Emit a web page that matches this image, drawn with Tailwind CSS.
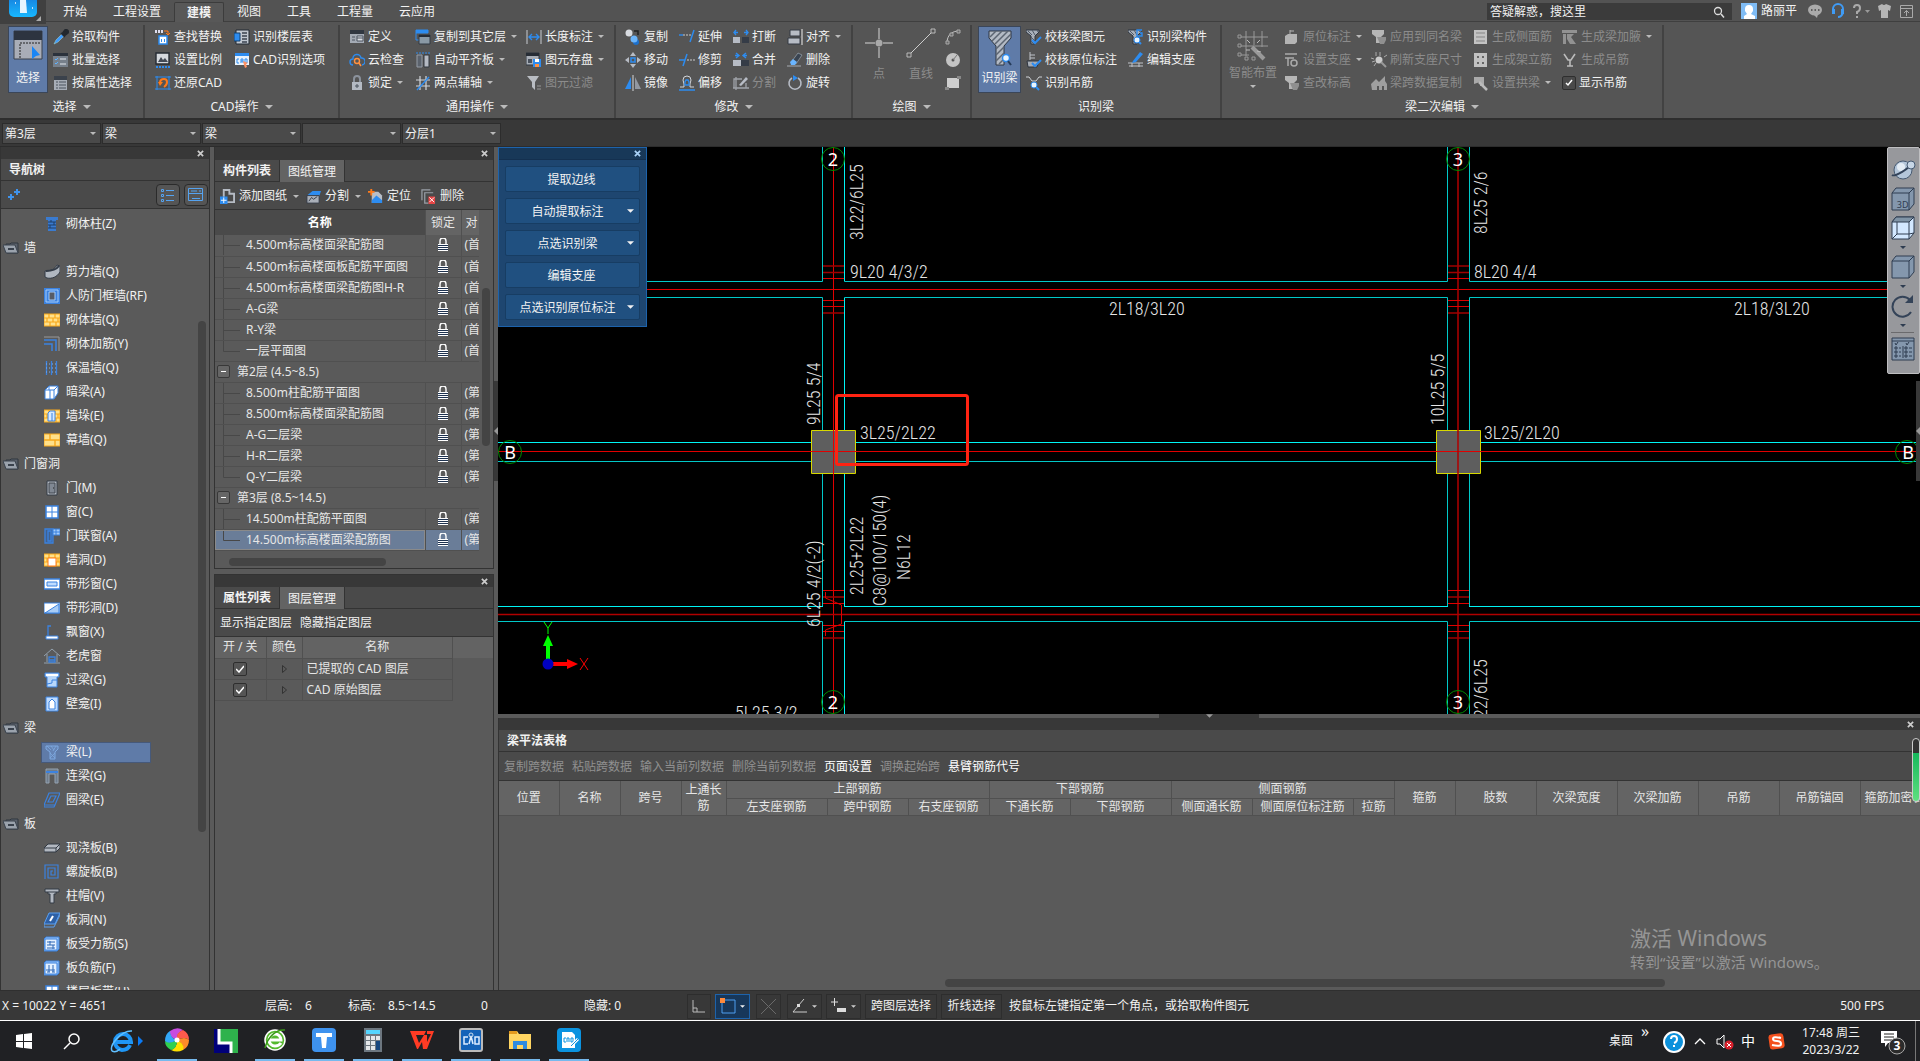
<!DOCTYPE html>
<html lang="zh-CN">
<head>
    <meta charset="UTF-8">
    <meta name="viewport" content="width=device-width, initial-scale=1.0">
    <title>梁平法表格 - 建模</title>
    <script src="https://cdn.jsdelivr.net/npm/@tailwindcss/browser@4"></script>
</head>
<body class="flex h-screen flex-col overflow-hidden bg-[#383838] font-['Noto_Sans','Noto_Sans_CJK_SC',sans-serif] text-xs text-[#f2f2f2]">

    <!-- Icon sprite -->
    <svg class="hidden">
        <defs>
            <symbol id="arrow" viewBox="0 0 8 4"><path d="M0 0h8L4 4z" fill="currentColor"/></symbol>
            <symbol id="close" viewBox="0 0 8 8"><path d="M1 1l6 6M7 1L1 7" stroke="currentColor" stroke-width="2"/></symbol>
            <symbol id="pick" viewBox="0 0 16 16"><path d="M1 15l2-4 6-6 2 2-6 6z" fill="#3d9bff" stroke="#9cc" stroke-width=".6"/><path d="M8 4l4 4M9 5l3-4c2-1 4 1 3 3l-4 3z" fill="#23282e" stroke="#23282e" stroke-width="1.6"/></symbol>
            <symbol id="batch" viewBox="0 0 16 16"><path d="M0 1h15v3H0z" fill="#2b323c"/><path d="M0 4h15v11H0z" fill="#77808b"/><path d="M2 7l1 1 2-2M2 11l1 1 2-2" fill="none" stroke="#5cb2ff"/><path d="M7 7h6M7 12h6" stroke="#e4e8ee"/></symbol>
            <symbol id="attr" viewBox="0 0 16 16"><path d="M1 1h13v14H1z" fill="#a7adb6"/><path d="M1 1h13v4H1z" fill="#3b424c"/><path d="M3 7h2M3 10h2M3 13h2M6 7h7M6 10h7M6 13h7" stroke="#4b525c"/></symbol>
            <symbol id="find" viewBox="0 0 16 16"><path d="M0 1h2v3H0zM3 1h2v3H3zM6 1h2v3H6z" fill="#dde"/><path d="M9 2h4v4m-2-2l2 2 2-2" fill="none" stroke="#ff7a1a"/><path d="M4 7h8v8H4z" fill="#fff" stroke="#2d8cf0" stroke-width="1.5"/><path d="M6 10h1v3H6zM9 10h1v3H9z" fill="#2d8cf0"/></symbol>
            <symbol id="scale" viewBox="0 0 16 16"><path d="M1 1h13v11H1z" fill="#d4d8dd" stroke="#252b33" stroke-width="1.4"/><path d="M3 10l3-5 2 3 2-2 3 4z" fill="#434a55"/><path d="M1 15h14" stroke="#2d8cf0" stroke-width="2" stroke-dasharray="2 1"/></symbol>
            <symbol id="restore" viewBox="0 0 16 16"><path d="M2 1v14M14 1v14M0 14h16M0 2h16" stroke="#2d8cf0"/><path d="M5 8q0-4 4-4 3 0 3 3t-3 5" fill="none" stroke="#ff7a1a" stroke-width="2"/><path d="M3 7h5l-3 4z" fill="#ff7a1a"/></symbol>
            <symbol id="floors" viewBox="0 0 16 16"><path d="M2 1h13v14H2z" fill="#c0c7d0" stroke="#232b35"/><path d="M0 4h6v8H0z" fill="#2d8cf0" stroke="#14406c"/><path d="M8 4h5M8 7h5M8 10h5M8 13h5" stroke="#39424e" stroke-width="1.4"/></symbol>
            <symbol id="cadopt" viewBox="0 0 16 16"><path d="M1 1h14v12H1z" fill="#e8f2fd"/><path d="M1 1h14v3H1z" fill="#2d8cf0"/><path d="M5 7H3v4h2M7 11V7h2v4M7 9h2M11 7v4h2V7z" fill="none" stroke="#2d8cf0"/><path d="M9 9l5 2-2 1 1 3-2 1-1-3z" fill="#ff9060"/></symbol>
            <symbol id="define" viewBox="0 0 16 16"><path d="M1 1h14v13H1z" fill="#a4abb5"/><path d="M1 1h14v4H1z" fill="#303741"/><path d="M3 8h3M3 11h3M8 7h6v5H8zM8 9h6" stroke="#4c5460" fill="#d8dce2"/></symbol>
            <symbol id="cloud" viewBox="0 0 16 16"><path d="M4 13a3 3 0 0 1 0-6 4 4 0 0 1 8-1 3 3 0 0 1 1 7" fill="none" stroke="#2d8cf0" stroke-width="1.4"/><circle cx="8" cy="9" r="2.5" fill="none" stroke="#ff9040" stroke-width="1.4"/><path d="M10 11l2 3" stroke="#ff9040" stroke-width="1.5"/></symbol>
            <symbol id="lock" viewBox="0 0 16 16"><path d="M5 7V4a3 3 0 0 1 6 0v3" fill="none" stroke="#8b929c" stroke-width="2"/><path d="M3 7h10v8H3z" fill="#b4bac3"/><path d="M8 9v4M6 11h4" stroke="#4b525c"/></symbol>
            <symbol id="copyto" viewBox="0 0 16 16"><path d="M1 1h12v3H1z" fill="#2d8cf0" stroke="#2d8cf0"/><path d="M1 4v7h3" fill="none" stroke="#2d8cf0"/><path d="M4 6h11v9H4z" fill="#8a99a5" stroke="#323a44"/><path d="M4 6h11v2H4z" fill="#252c36"/></symbol>
            <symbol id="align2" viewBox="0 0 16 16"><path d="M1 1h14" stroke="#2d8cf0" stroke-dasharray="2 1"/><path d="M2 3h5v12H2z" fill="#5b626c" stroke="#959ca6"/><path d="M9 3h5v12H9z" fill="#b4b9c2" stroke="#30363f"/></symbol>
            <symbol id="axis" viewBox="0 0 16 16"><path d="M5 1v14M11 1v14M1 5h14M1 11h14" stroke="#d2d6db" stroke-width="1.2"/><path d="M2 15L14 2" stroke="#2d8cf0" stroke-width="1.4"/></symbol>
            <symbol id="length" viewBox="0 0 16 16"><path d="M1 1v14M15 1v14" stroke="#c8ccd2"/><path d="M3 8h10M6 5L3 8l3 3M10 5l3 3-3 3" fill="none" stroke="#2d8cf0" stroke-width="1.4"/></symbol>
            <symbol id="save" viewBox="0 0 16 16"><path d="M0 1h13v12H0z" fill="#a8aeb7" stroke="#2f3640"/><path d="M0 1h13v3H0z" fill="#262c35"/><path d="M2 7h4v4H2z" fill="#49515d"/><path d="M7 7h8v8H7z" fill="#2d8cf0"/><path d="M9 7h4v3H9z" fill="#fff"/><path d="M9 12h4v3H9z" fill="#ff9040"/></symbol>
            <symbol id="filter" viewBox="0 0 16 16"><path d="M1 1h12L9 7v8l-3-3V7z" fill="#b9bdc3"/><path d="M11 11h4M11 14h4" stroke="#999"/></symbol>
            <symbol id="copy" viewBox="0 0 16 16"><circle cx="4" cy="4" r="3.5" fill="#d8dbe0"/><circle cx="11" cy="13" r="3" fill="#1c70cc"/><circle cx="9" cy="10" r="3.5" fill="#6bb4fa"/><path d="M9 2h4v4" fill="none" stroke="#222" stroke-width="1.5"/></symbol>
            <symbol id="move" viewBox="0 0 16 16"><path d="M8 0l3 4H5zM8 16l3-4H5zM0 8l4-3v6zM16 8l-4-3v6z" fill="#b7bcc5"/><path d="M6 6h4v4H6z" fill="none" stroke="#2d8cf0" stroke-width="1.5"/></symbol>
            <symbol id="mirror" viewBox="0 0 16 16"><path d="M6 2v12H0z" fill="#2d8cf0"/><path d="M10 2v12h6z" fill="#9298a1"/><path d="M8 0v16" stroke="#d5d8dc"/></symbol>
            <symbol id="extend" viewBox="0 0 16 16"><path d="M0 6h4" stroke="#2d8cf0" stroke-width="1.4"/><path d="M4 6h8" stroke="#ccc" stroke-dasharray="2 1"/><path d="M15 1l-4 12" stroke="#2d8cf0" stroke-width="1.5"/></symbol>
            <symbol id="trim" viewBox="0 0 16 16"><path d="M0 8h6M8 2L4 14" stroke="#2d8cf0" stroke-width="1.5"/><path d="M8 8h8" stroke="#ccc" stroke-dasharray="2 1"/></symbol>
            <symbol id="offset" viewBox="0 0 16 16"><path d="M1 12h4V9L4 5a4 4 0 0 1 8 0l-1 4v3h4" fill="none" stroke="#d0d4da"/><path d="M0 15h16M6 10h4V7l-1-2H7L6 7z" fill="none" stroke="#2d8cf0" stroke-width="1.3"/></symbol>
            <symbol id="break" viewBox="0 0 16 16"><path d="M3 1L1 3.500l2 2.500M13 1l2 2.500L13 6M1 3.500h4M15 3.500h-4" fill="none" stroke="#2d8cf0" stroke-width="1.4"/><path d="M0 8h7v6H0z" fill="#b7bcc5"/><path d="M9 8h7v6H9z" fill="#353c47"/></symbol>
            <symbol id="merge" viewBox="0 0 16 16"><path d="M3 1l3 2.500L3 6M13 1l-3 2.500L13 6M2 3.500h4M14 3.500h-4" fill="none" stroke="#2d8cf0" stroke-width="1.4"/><path d="M0 8h8v6H0z" fill="#b7bcc5"/><path d="M8 8h8v6H8z" fill="#353c47"/></symbol>
            <symbol id="split" viewBox="0 0 16 16"><path d="M9 4H1v9h12V8M0 13h16M3 2v13" fill="none" stroke="#a0a4aa" stroke-width="1.3"/><path d="M6 10l7-8 2 2-7 7z" fill="#b7bcc5"/></symbol>
            <symbol id="align" viewBox="0 0 16 16"><path d="M3 1h10v6H3zM1 9h12v6H1z" fill="#b7bcc5" stroke="#343b45"/><path d="M15 0v16" stroke="#eee"/></symbol>
            <symbol id="erase" viewBox="0 0 16 16"><path d="M0 14h14" stroke="#a7abb1"/><path d="M5 9l6-8 4 2-6 9z" fill="#3a4451" stroke="#99a3ad" stroke-width=".7"/><path d="M3 10l3-3 4 3-2 3H4z" fill="#6ab5ff"/></symbol>
            <symbol id="rotate" viewBox="0 0 16 16"><path d="M5 3a6 6 0 1 0 6 0" fill="none" stroke="#b7bcc5" stroke-width="1.6"/><path d="M6 0l5 3-5 3z" fill="#2d8cf0"/></symbol>
            <symbol id="point" viewBox="0 0 28 30"><path d="M14 0v11M14 19v11M0 15h10M18 15h10" stroke="#d6d6d6"/><circle cx="14" cy="15" r="3.500" fill="#a9a9a9"/></symbol>
            <symbol id="line" viewBox="0 0 30 30"><path d="M3 27L27 3" stroke="#ccc"/><path d="M1 25h4v4H1zM25 1h4v4h-4z" fill="#555" stroke="#bbb"/></symbol>
            <symbol id="arc" viewBox="0 0 16 16"><path d="M2 14C2 6 7 2 14 2" fill="none" stroke="#c4c4c4"/><path d="M1 12h3v3H1zM5 4h3v3H5zM12 1h3v3h-3z" fill="#666" stroke="#aaa"/></symbol>
            <symbol id="circ" viewBox="0 0 16 16"><circle cx="8" cy="8" r="7" fill="#c4c4c4"/><circle cx="8" cy="8" r="1.500" fill="#555"/><path d="M8 8l4-5" stroke="#777"/></symbol>
            <symbol id="rect" viewBox="0 0 16 16"><path d="M2 3h12v10H2z" fill="#cfcfcf"/><path d="M0 12h4v3H0zM12 1h4v3h-4z" fill="#888"/></symbol>
            <symbol id="beam" viewBox="0 0 16 16"><path d="M0 1h13v2L9 7v8H5V7L0 3z" fill="#a8b0ba" stroke="#2f3742"/><path d="M2 2l4 4M6 1l3 5M5 8l4 4M5 12l3 3M11 1l1 2" stroke="#515a66"/></symbol>
            <symbol id="bigbeam" viewBox="0 0 32 36"><path d="M5 1h22v7l-7 8v19h-8V16L5 8z" fill="#b3bac4" stroke="#2f3742"/><path d="M6 7l6-6M8 11L18 1M11 14L24 1M12 19L27 4M12 25l8-8M12 31l8-8M15 34l5-5" stroke="#5c6572" stroke-width="1.500"/><circle cx="22" cy="28" r="3.500" fill="#e7f4ff" stroke="#2d8cf0" stroke-width="1.500"/><path d="M24 31l3 4" stroke="#263c5a" stroke-width="2"/></symbol>
            <symbol id="beamcheck" viewBox="0 0 16 16"><use href="#beam"/><path d="M6 11l3 3 6-6" fill="none" stroke="#2d8cf0" stroke-width="2"/></symbol>
            <symbol id="notecheck" viewBox="0 0 16 16"><path d="M4 0v8M4 3h5M4 6h5" stroke="#c0c4ca"/><path d="M1 9h12l-2 6H2z" fill="#a6acb5" stroke="#2d343e"/><path d="M6 11l3 3 6-6" fill="none" stroke="#2d8cf0" stroke-width="2"/></symbol>
            <symbol id="hang" viewBox="0 0 16 16"><path d="M0 2h3l3 4h4l3-4h3" fill="none" stroke="#cfd2d6"/><circle cx="8" cy="10" r="3" fill="#e7f4ff" stroke="#2d8cf0"/><path d="M10 12l3 3" stroke="#2d8cf0" stroke-width="2"/></symbol>
            <symbol id="beamg" viewBox="0 0 16 16"><use href="#beam"/><path d="M14 1H9v6h5V4h-2" fill="none" stroke="#2d8cf0" stroke-width="1.400"/><circle cx="9" cy="11" r="3" fill="#e7f4ff" stroke="#2d8cf0"/><path d="M11 13l2 2" stroke="#2d8cf0" stroke-width="2"/></symbol>
            <symbol id="editbeam" viewBox="0 0 16 16"><path d="M0 11h15M1 14h14M4 11v4M11 11v4" stroke="#c0c4ca"/><path d="M5 9l7-9 3 2-7 8-4 1z" fill="#2d8cf0"/></symbol>
            <symbol id="smart" viewBox="0 0 32 32"><path d="M9 2v25M17 2v14M25 2v16M4 8h27M4 17h27M4 26h8" stroke="#999"/><path d="M1 6h3v3H1zM1 15h3v3H1zM1 24h3v3H1zM8 28h3v3H8zM15 28h3v3h-3z" fill="#555" stroke="#999"/><path d="M15 18l12 12" stroke="#999" stroke-width="4"/><path d="M9 21h4M20 14l3-3M13 14l-3-3M20 22l4 1" stroke="#bbb"/></symbol>
            <symbol id="g-note" viewBox="0 0 16 16"><path d="M1 7l3-2h9v8l-2 2H1z" fill="#b4b4b4"/><path d="M6 6V1M6 2h4" stroke="#b4b4b4"/></symbol>
            <symbol id="g-seat" viewBox="0 0 16 16"><path d="M1 2h12M1 6h9M4 6v8" stroke="#aaa" stroke-width="1.500"/><circle cx="10" cy="11" r="3" fill="none" stroke="#aaa" stroke-width="1.500"/></symbol>
            <symbol id="g-beam" viewBox="0 0 16 16"><path d="M1 1h12v4l-3 3v6H5V8L1 5z" fill="#b6b6b6"/><path d="M6 8h9v3l-2 4H9z" fill="#8f8f8f"/></symbol>
            <symbol id="g-ref" viewBox="0 0 16 16"><path d="M5 0v4M9 0v4M0 6l3 1M1 10l3-1M13 5l3-2M3 14l2-3" stroke="#ababab"/><circle cx="8" cy="8" r="3.500" fill="#ccc"/><path d="M10 10l5 5" stroke="#999" stroke-width="2"/></symbol>
            <symbol id="g-span" viewBox="0 0 16 16"><path d="M0 9l5-5 3 3 6-6v5l2 3v6h-3v-4h-2v4H8v-4H6v4H1z" fill="#9f9f9f"/></symbol>
            <symbol id="g-list" viewBox="0 0 16 16"><path d="M1 1h13v14H1z" fill="#c2c2c2"/><path d="M3 4h9M3 8h9M3 12h9" stroke="#858585"/></symbol>
            <symbol id="g-dots" viewBox="0 0 16 16"><path d="M1 1h13v14H1z" fill="#c2c2c2"/><path d="M4 4h2v2H4zM9 4h2v2H9zM4 10h2v2H4zM9 10h2v2H9z" fill="#666"/></symbol>
            <symbol id="g-arch" viewBox="0 0 16 16"><path d="M1 2h10v9H7V7L1 9z" fill="#aaa"/><path d="M6 7l8 8" stroke="#bbb" stroke-width="2.500"/></symbol>
            <symbol id="g-hau" viewBox="0 0 16 16"><path d="M0 1h15v3H0zM1 5h3v10H1zM5 5h7l-3 3 5 7H8L5 10z" fill="#929292"/></symbol>
            <symbol id="g-hook" viewBox="0 0 16 16"><path d="M2 2l4 6h3l4-6M8 8v6M5 14h6" fill="none" stroke="#bbb" stroke-width="1.600"/></symbol>
            <symbol id="padlock" viewBox="0 0 12 14"><path d="M3 6V3a3 3 0 0 1 6 0v3" fill="none" stroke="#fff" stroke-width="1.400"/><path d="M1 6h10v7H1z" fill="#1f3350"/><path d="M1 6.500h10M1 8.500h10M1 10.500h10M1 12.500h10" stroke="#fff"/></symbol>
            <symbol id="folder" viewBox="0 0 16 12"><path d="M3 2h4l1-1h7v10H4z" fill="#5a616b" stroke="#2f363f"/><path d="M0 3h12l3 8H3z" fill="#9aa2ac" stroke="#3a424d"/><path d="M5 7h6" stroke="#39414c" stroke-width="2"/></symbol>
            <symbol id="t-col" viewBox="0 0 16 16"><path d="M2 1h12v3h-2v11H4V4H2z" fill="#3a7bd0"/><path d="M4 6h8M4 9h8M4 12h8M7 4v2M10 6v3M6 9v3" stroke="#1f3e68"/></symbol>
            <symbol id="t-wall" viewBox="0 0 16 16"><path d="M1 7c6 0 10-2 12-6l3 1v6c-3 5-8 7-13 6l-2-1z" fill="#b0b7c0" stroke="#333b46"/><path d="M2 7c6 0 10-1 13-5" fill="none" stroke="#333b46" stroke-width="2"/></symbol>
            <symbol id="t-rf" viewBox="0 0 16 16"><path d="M0 0h16v16H0z" fill="#3b82e0"/><path d="M2 2h12v12H2z" fill="none" stroke="#a5ccfa"/><path d="M5 4h6v8H5z" fill="#565c66" stroke="#a5ccfa"/></symbol>
            <symbol id="t-brick" viewBox="0 0 16 16"><path d="M0 2h16v12H0z" fill="#ffe08a" stroke="#f8a81b"/><path d="M0 6h16M0 10h16M5 2v4M11 2v4M3 6v4M9 6v4M14 6v4M6 10v4M12 10v4" stroke="#f8a81b" stroke-width="1.200"/></symbol>
            <symbol id="t-bricks" viewBox="0 0 16 16"><path d="M0 2h16v12H0z" fill="#ffe08a" stroke="#f8a81b"/><path d="M0 8h16M6 2v6M11 8v6" stroke="#f8a81b" stroke-width="1.400"/></symbol>
            <symbol id="t-hole" viewBox="0 0 16 16"><use href="#t-brick"/><path d="M4 6h8v8H4z" fill="#fff" stroke="#ff7a1a"/></symbol>
            <symbol id="t-stack" viewBox="0 0 16 16"><use href="#t-brick"/><path d="M4 5l2-2h5v10H4z" fill="#d5e9ff" stroke="#3b82e0"/><path d="M8 5v8" stroke="#3b82e0"/></symbol>
            <symbol id="t-rebar" viewBox="0 0 16 16"><path d="M0 1h15v14" fill="none" stroke="#999"/><path d="M0 4h12v11M0 8h8v7" fill="none" stroke="#3b82e0" stroke-width="1.500"/></symbol>
            <symbol id="t-ins" viewBox="0 0 16 16"><path d="M2.500 1v14M7.500 1v14M12.500 1v14" stroke="#3b82e0" stroke-width="1.300"/><path d="M2 4h11M2 8h11M2 12h11" stroke="#7bb2f5" stroke-dasharray="1 2"/></symbol>
            <symbol id="t-dark" viewBox="0 0 16 16"><path d="M1 6l4-4h9v7l-4 6H1z" fill="#fff" stroke="#3b82e0"/><path d="M1 6h9l4-4M5 2v4M6 6v9M10 6v9" fill="none" stroke="#3b82e0"/></symbol>
            <symbol id="t-door" viewBox="0 0 16 16"><path d="M3 1h10v14H3z" fill="#b1b7c0" stroke="#353c46"/><path d="M5 3h6v10H5z" fill="#808893" stroke="#40474f"/><path d="M9 8h1" stroke="#222"/></symbol>
            <symbol id="t-win" viewBox="0 0 16 16"><path d="M2 2h12v12H2z" fill="#fff" stroke="#3b82e0" stroke-width="1.500"/><path d="M8 2v12M2 8h12" stroke="#3b82e0"/></symbol>
            <symbol id="t-dw" viewBox="0 0 16 16"><path d="M1 1h8v14H1zM4 3h3v10H4z" fill="#40618e" stroke="#3b82e0" stroke-width="1.300"/><path d="M9 1h7v6H9zM12 1v6M9 4h7" fill="#a5ccfa" stroke="#3b82e0"/></symbol>
            <symbol id="t-strip" viewBox="0 0 16 16"><path d="M0 3h16v10H0z" fill="#fff" stroke="#3b82e0" stroke-width="1.500"/><path d="M3 6h10v4H3z" fill="#bfdcff" stroke="#3b82e0"/></symbol>
            <symbol id="t-strip2" viewBox="0 0 16 16"><path d="M0 3h16v10H0z" fill="#fff" stroke="#3b82e0"/><path d="M1 13L15 4v9z" fill="#a9cdf6" stroke="#3b82e0"/></symbol>
            <symbol id="t-bay" viewBox="0 0 16 16"><path d="M7 2H4v10" fill="none" stroke="#3b82e0" stroke-width="1.300"/><path d="M2 12h12v3H2z" fill="#fff" stroke="#3b82e0"/></symbol>
            <symbol id="t-house" viewBox="0 0 16 16"><path d="M0 8l8-7 8 7M3 6v8M13 6v8M0 15h16" fill="none" stroke="#93a1ae"/><path d="M5 9h6v5H5zM5 12h6" fill="none" stroke="#3b82e0" stroke-width="1.300"/></symbol>
            <symbol id="t-lint" viewBox="0 0 16 16"><path d="M1 1h14v4h-2v10H3V5H1z" fill="#b8d7fa" stroke="#3b82e0"/><path d="M2 3h12" stroke="#fff" stroke-width="2"/><path d="M3 12l5-1V8h5" fill="none" stroke="#3b82e0"/></symbol>
            <symbol id="t-niche" viewBox="0 0 16 16"><path d="M2 1h12v14H2z" fill="#bfdcff" stroke="#3b82e0"/><path d="M5 13V6l3-3 3 3v7z" fill="#fff" stroke="#3b82e0"/></symbol>
            <symbol id="t-beam" viewBox="0 0 16 16"><path d="M2 2h12v3l-3 3v7H6V8L2 5z" fill="#6584b5" stroke="#7fa9e0"/><path d="M3 2l4 4M7 2l3 4M12 2l-3 5M6 9l5 5M11 9l-5 5" stroke="#7fa9e0" stroke-width=".8"/></symbol>
            <symbol id="t-link" viewBox="0 0 16 16"><path d="M2 15V1h12v14h-3V6H5v9z" fill="#6f7c8b" stroke="#94a2b1"/><path d="M2 4h12" stroke="#3b82e0" stroke-width="2"/></symbol>
            <symbol id="t-ring" viewBox="0 0 16 16"><path d="M5 1h11l-5 12H0zM7 4h5l-3 6H4zM0 13v2h10l1-2" fill="none" stroke="#3b82e0" stroke-width="1.200"/></symbol>
            <symbol id="t-slab" viewBox="0 0 16 16"><path d="M0 8l4-4h12v4l-4 4H0z" fill="#b2b8c1" stroke="#333a44"/><path d="M0 8h12l4-4M12 8v4" fill="none" stroke="#333a44"/></symbol>
            <symbol id="t-spiral" viewBox="0 0 16 16"><path d="M1 15V1h13v13H4V4h7v7H7V7h2" fill="none" stroke="#3b82e0" stroke-width="1.200"/></symbol>
            <symbol id="t-cap" viewBox="0 0 16 16"><path d="M1 1h14v3h-3v2h-2v9H6V6H4V4H1z" fill="#b2b8c1" stroke="#333a44"/><path d="M4 4h8" stroke="#333a44"/></symbol>
            <symbol id="t-sh" viewBox="0 0 16 16"><path d="M5 1h11l-5 11H0z" fill="#2e60a5" stroke="#5a9ff0"/><path d="M0 12v3h10l6-12" fill="none" stroke="#5a9ff0"/><path d="M6 9l3-5" stroke="#fff" stroke-width="2"/></symbol>
            <symbol id="t-sr" viewBox="0 0 16 16"><path d="M0 3l2-2h13v12l-2 2H0z" fill="#9bc5f7" stroke="#3b82e0"/><path d="M1 3h12v11H1z" fill="#e5f1ff" stroke="#3b82e0"/><path d="M3 6h8M3 9h8M3 12h8M6 5v4M9 9v4" stroke="#2c67b5"/></symbol>
            <symbol id="t-sf" viewBox="0 0 16 16"><path d="M0 3l2-2h13v12l-2 2H0z" fill="#9bc5f7" stroke="#3b82e0"/><path d="M1 3h12v11H1z" fill="#e5f1ff" stroke="#3b82e0"/><path d="M5 5v7M9 5v7M2 10h9M3 12h3M8 12h3" stroke="#2c67b5"/></symbol>
            <symbol id="cube" viewBox="0 0 24 24"><path d="M1 6l4-5h18v16l-5 6H1z" fill="#8497ad" stroke="#2e3c50"/><path d="M1 6h17l5-5M18 6v17" fill="none" stroke="#2e3c50"/></symbol>
        </defs>
    </svg>

    <!-- Title bar with tabs -->
    <header class="flex h-[22px] shrink-0 items-end border-b border-[#3f3f3f] bg-[#535353]">
        <div class="relative z-10 h-6 w-[46px] shrink-0 self-start bg-[#404040]">
            <svg class="h-6 w-[46px]" viewBox="0 0 46 24">
                <defs><linearGradient id="lg" x2="0" y2="1"><stop stop-color="#1668cf"/><stop offset="1" stop-color="#18b8ff"/></linearGradient></defs>
                <rect x="9" y="-12" width="28" height="29" rx="5" fill="url(#lg)"/>
                <path d="M20 0h6l1 13h-7z" fill="#e4f5ff"/><path d="M15 3h1M32 8h1" stroke="#bdf" stroke-width="2"/><path d="M41 16v5h-5z" fill="#aaa"/>
            </svg>
        </div>
        <nav class="ml-1 flex h-[19px] flex-1 items-center">
            <a href="#" class="px-[13px]">开始</a>
            <a href="#" class="px-[13px]">工程设置</a>
            <a href="#" class="-mb-px flex h-5 items-center rounded-t-xs border border-b-0 border-[#3c3c3c] bg-[#585858] px-3 font-bold">建模</a>
            <a href="#" class="px-[13px]">视图</a>
            <a href="#" class="px-[13px]">工具</a>
            <a href="#" class="px-[13px]">工程量</a>
            <a href="#" class="px-[13px]">云应用</a>
        </nav>
        <label class="mb-px flex h-[17px] w-[245px] items-center bg-[#3b3b3b] px-[3px]">
            <input type="text" value="答疑解惑，搜这里" aria-label="搜索" class="w-full min-w-0 flex-1 bg-transparent outline-none">
            <svg class="mr-1 size-3" viewBox="0 0 12 12"><circle cx="5" cy="5" r="3.500" fill="none" stroke="#ddd" stroke-width="1.300"/><path d="M8 8l3 3.500" stroke="#ddd" stroke-width="1.500"/></svg>
        </label>
        <div class="flex h-[21px] w-[188px] items-center pl-[9px]">
            <svg class="size-4 shrink-0" viewBox="0 0 16 16"><path d="M0 0h16v16H0z" fill="#7fbcf5"/><path d="M4 6a4 4 0 0 1 8 0v2l-2 3 4 2v3H3v-3l3-2-2-3z" fill="#fff"/></svg>
            <span class="ml-1 w-[46px] shrink-0">路丽平</span>
            <svg class="h-4 w-[113px] shrink-0" viewBox="0 0 113 16">
                <ellipse cx="8" cy="7" rx="7" ry="5.500" fill="#aaa"/><path d="M6 11l4 4 1-4" fill="#aaa"/><path d="M4 7h1.500M7.500 7H9M11 7h1.500" stroke="#444" stroke-width="1.500"/>
                <path d="M26 10V6a5 5 0 0 1 10 0v3q-1 5-5 5" fill="none" stroke="#3f9bf5" stroke-width="2"/><path d="M25 6h3v5h-3zM34 6h3v5h-3z" fill="#3f9bf5"/>
                <path d="M47 5q0-3 3-3t3 3-3 4v2M50 13v2" fill="none" stroke="#aaa" stroke-width="2"/><path d="M58 7h5l-2.500 3z" fill="#999"/>
                <path d="M71 3l4-2q2 2 4 0l5 2-1 5-2-1v8h-7V7l-2 1z" fill="#b5b5b5"/>
                <path d="M93.500 2.500h12v12h-12zM93.500 5.500h12M99.500 13V7.500M97 10l2.500-2.500L102 10" fill="none" stroke="#aaa"/>
            </svg>
        </div>
    </header>

    <!-- Ribbon -->
    <section class="flex h-[98px] shrink-0 border-b-2 border-[#2e2e2e] bg-[#555] pt-[3px] whitespace-nowrap">
        <div class="flex w-[145px] flex-col border-r-2 border-[#424242]">
            <div class="flex h-[72px] pl-2">
                <button class="mt-px flex h-[67px] w-10 flex-col items-center gap-1 border border-[#3b4658] bg-[#5f7ba8] pt-[3px]">
                    <svg class="h-9 w-[30px]" viewBox="0 0 30 36"><path d="M1 1h28v28H1z" fill="#a9adb7" stroke="#3a404b"/><path d="M1 1h28v9H1z" fill="#2d3440"/><path d="M7 28V13h21" fill="none" stroke="#222" stroke-dasharray="2 1"/><path d="M19 16l8 9-4 1-4 3z" fill="#1b86f5"/></svg>
                    选择
                </button>
                <div class="ml-[5px] flex flex-col">
                    <button class="flex h-[23px] items-center gap-[3px]"><svg class="size-4"><use href="#pick"/></svg>拾取构件</button>
                    <button class="flex h-[23px] items-center gap-[3px]"><svg class="size-4"><use href="#batch"/></svg>批量选择</button>
                    <button class="flex h-[23px] items-center gap-[3px]"><svg class="size-4"><use href="#attr"/></svg>按属性选择</button>
                </div>
            </div>
            <button class="flex h-5 items-center justify-center gap-1.5">选择<svg class="h-1 w-2 text-[#bbb]"><use href="#arrow"/></svg></button>
        </div>
        <div class="flex w-[195px] flex-col border-r-2 border-[#424242]">
            <div class="flex h-[72px] pl-[10px]">
                <div class="flex w-[79px] flex-col">
                    <button class="flex h-[23px] items-center gap-[3px]"><svg class="size-4"><use href="#find"/></svg>查找替换</button>
                    <button class="flex h-[23px] items-center gap-[3px]"><svg class="size-4"><use href="#scale"/></svg>设置比例</button>
                    <button class="flex h-[23px] items-center gap-[3px]"><svg class="size-4"><use href="#restore"/></svg>还原CAD</button>
                </div>
                <div class="flex flex-col">
                    <button class="flex h-[23px] items-center gap-[3px]"><svg class="size-4"><use href="#floors"/></svg>识别楼层表</button>
                    <button class="flex h-[23px] items-center gap-[3px]"><svg class="size-4"><use href="#cadopt"/></svg>CAD识别选项</button>
                </div>
            </div>
            <button class="flex h-5 items-center justify-center gap-1.5">CAD操作<svg class="h-1 w-2 text-[#bbb]"><use href="#arrow"/></svg></button>
        </div>
        <div class="flex w-[276px] flex-col border-r-2 border-[#424242]">
            <div class="flex h-[72px] pl-[9px]">
                <div class="flex w-[66px] flex-col">
                    <button class="flex h-[23px] items-center gap-[3px]"><svg class="size-4"><use href="#define"/></svg>定义</button>
                    <button class="flex h-[23px] items-center gap-[3px]"><svg class="size-4"><use href="#cloud"/></svg>云检查</button>
                    <button class="flex h-[23px] items-center gap-[3px]"><svg class="size-4"><use href="#lock"/></svg>锁定<svg class="ml-0.5 h-[3px] w-1.5 text-[#bbb]"><use href="#arrow"/></svg></button>
                </div>
                <div class="flex w-[111px] flex-col">
                    <button class="flex h-[23px] items-center gap-[3px]"><svg class="size-4"><use href="#copyto"/></svg>复制到其它层<svg class="ml-0.5 h-[3px] w-1.5 text-[#bbb]"><use href="#arrow"/></svg></button>
                    <button class="flex h-[23px] items-center gap-[3px]"><svg class="size-4"><use href="#align2"/></svg>自动平齐板<svg class="ml-0.5 h-[3px] w-1.5 text-[#bbb]"><use href="#arrow"/></svg></button>
                    <button class="flex h-[23px] items-center gap-[3px]"><svg class="size-4"><use href="#axis"/></svg>两点辅轴<svg class="ml-0.5 h-[3px] w-1.5 text-[#bbb]"><use href="#arrow"/></svg></button>
                </div>
                <div class="flex flex-col">
                    <button class="flex h-[23px] items-center gap-[3px]"><svg class="size-4"><use href="#length"/></svg>长度标注<svg class="ml-0.5 h-[3px] w-1.5 text-[#bbb]"><use href="#arrow"/></svg></button>
                    <button class="flex h-[23px] items-center gap-[3px]"><svg class="size-4"><use href="#save"/></svg>图元存盘<svg class="ml-0.5 h-[3px] w-1.5 text-[#bbb]"><use href="#arrow"/></svg></button>
                    <button class="flex h-[23px] items-center gap-[3px] text-[#8c8c8c]"><svg class="size-4"><use href="#filter"/></svg>图元过滤</button>
                </div>
            </div>
            <button class="flex h-5 items-center justify-center gap-1.5">通用操作<svg class="h-1 w-2 text-[#bbb]"><use href="#arrow"/></svg></button>
        </div>
        <div class="flex w-[237px] flex-col border-r-2 border-[#424242]">
            <div class="flex h-[72px] pl-[9px]">
                <div class="flex w-[54px] flex-col">
                    <button class="flex h-[23px] items-center gap-[3px]"><svg class="size-4"><use href="#copy"/></svg>复制</button>
                    <button class="flex h-[23px] items-center gap-[3px]"><svg class="size-4"><use href="#move"/></svg>移动</button>
                    <button class="flex h-[23px] items-center gap-[3px]"><svg class="size-4"><use href="#mirror"/></svg>镜像</button>
                </div>
                <div class="flex w-[54px] flex-col">
                    <button class="flex h-[23px] items-center gap-[3px]"><svg class="size-4"><use href="#extend"/></svg>延伸</button>
                    <button class="flex h-[23px] items-center gap-[3px]"><svg class="size-4"><use href="#trim"/></svg>修剪</button>
                    <button class="flex h-[23px] items-center gap-[3px]"><svg class="size-4"><use href="#offset"/></svg>偏移</button>
                </div>
                <div class="flex w-[54px] flex-col">
                    <button class="flex h-[23px] items-center gap-[3px]"><svg class="size-4"><use href="#break"/></svg>打断</button>
                    <button class="flex h-[23px] items-center gap-[3px]"><svg class="size-4"><use href="#merge"/></svg>合并</button>
                    <button class="flex h-[23px] items-center gap-[3px] text-[#8c8c8c]"><svg class="size-4"><use href="#split"/></svg>分割</button>
                </div>
                <div class="flex flex-col">
                    <button class="flex h-[23px] items-center gap-[3px]"><svg class="size-4"><use href="#align"/></svg>对齐<svg class="ml-0.5 h-[3px] w-1.5 text-[#bbb]"><use href="#arrow"/></svg></button>
                    <button class="flex h-[23px] items-center gap-[3px]"><svg class="size-4"><use href="#erase"/></svg>删除</button>
                    <button class="flex h-[23px] items-center gap-[3px]"><svg class="size-4"><use href="#rotate"/></svg>旋转</button>
                </div>
            </div>
            <button class="flex h-5 items-center justify-center gap-1.5">修改<svg class="h-1 w-2 text-[#bbb]"><use href="#arrow"/></svg></button>
        </div>
        <div class="flex w-[119px] flex-col border-r-2 border-[#424242]">
            <div class="flex h-[72px] pl-1 text-[#8c8c8c]">
                <button class="flex w-11 flex-col items-center gap-2 pt-[3px]"><svg class="h-[30px] w-7"><use href="#point"/></svg>点</button>
                <button class="flex w-10 flex-col items-center gap-2 pt-[3px]"><svg class="size-[30px]"><use href="#line"/></svg>直线</button>
                <div class="flex flex-col">
                    <button class="flex h-[23px] items-center pl-1" aria-label="弧"><svg class="size-4"><use href="#arc"/></svg></button>
                    <button class="flex h-[23px] items-center pl-1" aria-label="圆"><svg class="size-4"><use href="#circ"/></svg></button>
                    <button class="flex h-[23px] items-center pl-1" aria-label="矩形"><svg class="size-4"><use href="#rect"/></svg></button>
                </div>
            </div>
            <button class="flex h-5 items-center justify-center gap-1.5">绘图<svg class="h-1 w-2 text-[#bbb]"><use href="#arrow"/></svg></button>
        </div>
        <div class="flex w-[250px] flex-col border-r-2 border-[#424242]">
            <div class="flex h-[72px] pl-[6px]">
                <button class="mt-px flex h-[67px] w-[43px] flex-col items-center gap-1 border border-[#3b4658] bg-[#5f7ba8] pt-[3px]"><svg class="h-9 w-8"><use href="#bigbeam"/></svg>识别梁</button>
                <div class="ml-[5px] flex w-[102px] flex-col">
                    <button class="flex h-[23px] items-center gap-[3px]"><svg class="size-4"><use href="#beamcheck"/></svg>校核梁图元</button>
                    <button class="flex h-[23px] items-center gap-[3px]"><svg class="size-4"><use href="#notecheck"/></svg>校核原位标注</button>
                    <button class="flex h-[23px] items-center gap-[3px]"><svg class="size-4"><use href="#hang"/></svg>识别吊筋</button>
                </div>
                <div class="flex flex-col">
                    <button class="flex h-[23px] items-center gap-[3px]"><svg class="size-4"><use href="#beamg"/></svg>识别梁构件</button>
                    <button class="flex h-[23px] items-center gap-[3px]"><svg class="size-4"><use href="#editbeam"/></svg>编辑支座</button>
                </div>
            </div>
            <div class="flex h-5 items-center justify-center">识别梁</div>
        </div>
        <div class="flex w-[442px] flex-col border-r-2 border-[#424242]">
            <div class="flex h-[72px] pl-[6px] text-[#8c8c8c]">
                <button class="flex w-[50px] flex-col items-center gap-1 pt-1"><svg class="size-8"><use href="#smart"/></svg>智能布置<svg class="h-[3px] w-1.5 text-[#bbb]"><use href="#arrow"/></svg></button>
                <div class="ml-[6px] flex w-[87px] flex-col">
                    <button class="flex h-[23px] items-center gap-[3px]"><svg class="size-4"><use href="#g-note"/></svg>原位标注<svg class="ml-0.5 h-[3px] w-1.5 text-[#bbb]"><use href="#arrow"/></svg></button>
                    <button class="flex h-[23px] items-center gap-[3px]"><svg class="size-4"><use href="#g-seat"/></svg>设置支座<svg class="ml-0.5 h-[3px] w-1.5 text-[#bbb]"><use href="#arrow"/></svg></button>
                    <button class="flex h-[23px] items-center gap-[3px]"><svg class="size-4"><use href="#g-beam"/></svg>查改标高</button>
                </div>
                <div class="flex w-[102px] flex-col">
                    <button class="flex h-[23px] items-center gap-[3px]"><svg class="size-4"><use href="#g-beam"/></svg>应用到同名梁</button>
                    <button class="flex h-[23px] items-center gap-[3px]"><svg class="size-4"><use href="#g-ref"/></svg>刷新支座尺寸</button>
                    <button class="flex h-[23px] items-center gap-[3px]"><svg class="size-4"><use href="#g-span"/></svg>梁跨数据复制</button>
                </div>
                <div class="flex w-[89px] flex-col">
                    <button class="flex h-[23px] items-center gap-[3px]"><svg class="size-4"><use href="#g-list"/></svg>生成侧面筋</button>
                    <button class="flex h-[23px] items-center gap-[3px]"><svg class="size-4"><use href="#g-dots"/></svg>生成架立筋</button>
                    <button class="flex h-[23px] items-center gap-[3px]"><svg class="size-4"><use href="#g-arch"/></svg>设置拱梁<svg class="ml-0.5 h-[3px] w-1.5 text-[#bbb]"><use href="#arrow"/></svg></button>
                </div>
                <div class="flex flex-col">
                    <button class="flex h-[23px] items-center gap-[3px]"><svg class="size-4"><use href="#g-hau"/></svg>生成梁加腋<svg class="ml-0.5 h-[3px] w-1.5 text-[#bbb]"><use href="#arrow"/></svg></button>
                    <button class="flex h-[23px] items-center gap-[3px]"><svg class="size-4"><use href="#g-hook"/></svg>生成吊筋</button>
                    <label class="relative flex h-[23px] items-center gap-[3px] text-[#f2f2f2]"><input type="checkbox" checked class="size-[14px] appearance-none rounded-xs border border-[#2e2e2e] bg-[#4a4a4a]"><svg class="pointer-events-none absolute left-[3px] size-2" viewBox="0 0 8 8"><path d="M1 4l2 2 4-5" fill="none" stroke="#fff" stroke-width="1.500"/></svg>显示吊筋</label>
                </div>
            </div>
            <button class="flex h-5 items-center justify-center gap-1.5">梁二次编辑<svg class="h-1 w-2 text-[#bbb]"><use href="#arrow"/></svg></button>
        </div>
    </section>

    <!-- Floor / member selectors -->
    <div id="selectors" class="flex h-[27px] shrink-0 gap-px border-b border-[#2c2c2c] px-[2px] pt-[3px] pb-[2px]"></div>

    <main class="flex min-h-0 flex-1 bg-[#5a5a5a]">
        <!-- Navigation tree -->
        <aside class="flex w-[210px] shrink-0 flex-col border-x border-[#333]">
            <div class="flex h-3 shrink-0 items-center justify-end bg-[#383838] pr-[5px]"><button aria-label="关闭" class="text-[#ccc]"><svg class="size-[7px]"><use href="#close"/></svg></button></div>
            <h2 class="flex h-[22px] shrink-0 items-center border-b border-[#333] bg-[#4a4a4a] pl-2 font-bold">导航树</h2>
            <div class="flex h-7 shrink-0 items-center gap-1 border-b border-[#333] bg-[#4a4a4a] pr-px pl-[6px]">
                <button aria-label="展开" class="mr-auto"><svg class="size-4" viewBox="0 0 16 16"><path d="M1 10h6M4 7v6M7 5h6M10 2v6" stroke="#3f93ec" stroke-width="2"/></svg></button>
                <button aria-label="列表" class="flex h-[22px] w-6 items-center justify-center rounded-sm border border-[#2b2b2b] bg-[#555]"><svg class="size-[14px]" viewBox="0 0 14 14"><path d="M.500 1.500h2v2h-2zM.500 6.500h2v2h-2zM.500 11.500h2v2h-2zM5 2.500h8M5 7.500h8M5 12.500h8" fill="none" stroke="#55a3f0"/></svg></button>
                <button aria-label="窗口" class="flex h-[22px] w-6 items-center justify-center rounded-sm border border-[#2b2b2b] bg-[#555]"><svg class="size-[16px]" viewBox="0 0 16 16"><path d="M.500 1.500h14v12h-14zM.500 6.500h14M3 4h6M11 4h2M4 11.500h8" fill="none" stroke="#55a3f0"/></svg></button>
            </div>
            <div class="relative min-h-0 flex-1 overflow-hidden pt-[3px]">
                <ul id="tree"></ul>
                <div class="absolute top-[112px] right-[3px] h-[511px] w-2 rounded-full bg-[#444]"></div>
            </div>
        </aside>

        <div class="w-1 shrink-0"></div>

        <!-- Drawings and layers -->
        <div class="flex w-[280px] shrink-0 flex-col">
            <section class="flex h-[422px] shrink-0 flex-col border border-t-0 border-[#333]">
                <div class="flex h-[13px] shrink-0 items-center justify-end bg-[#383838] pr-[5px]"><button aria-label="关闭" class="text-[#ccc]"><svg class="size-[7px]"><use href="#close"/></svg></button></div>
                <div class="flex h-[22px] shrink-0 items-stretch border-b border-[#333] bg-[#4a4a4a]">
                    <button class="w-[65px] border-r border-[#333] font-bold">构件列表</button>
                    <button class="-mb-px w-[65px] border-r border-[#333] bg-[#636363] pt-px">图纸管理</button>
                </div>
                <div class="flex h-7 shrink-0 items-center border-b border-[#333] bg-[#4a4a4a] pt-px pl-[5px]">
                    <button class="flex w-[86px] items-center gap-1"><svg class="size-[15px]" viewBox="0 0 16 16"><path d="M4 1h6v4h5v9H4z" fill="#4a4a4a" stroke="#b5bbc4" stroke-width="2"/><path d="M0 8h8v8H0z" fill="#2d8cf0"/><path d="M1 12h6M4 9v6" stroke="#fff"/></svg>添加图纸<svg class="ml-0.5 h-[3px] w-1.5 text-[#bbb]"><use href="#arrow"/></svg></button>
                    <button class="flex w-[62px] items-center gap-1"><svg class="size-[15px]" viewBox="0 0 16 16"><path d="M1 7l6-5h9l-2 6H1z" fill="#2d8cf0"/><path d="M1 7h13v8H1z" fill="#a9afb8" stroke="#333b46"/><path d="M3 13l3-4 2 2 4-3" fill="none" stroke="#333b46"/></svg>分割<svg class="ml-0.5 h-[3px] w-1.5 text-[#bbb]"><use href="#arrow"/></svg></button>
                    <button class="flex w-[53px] items-center gap-1"><svg class="size-[15px]" viewBox="0 0 16 16"><path d="M4 3h7l4 4v8H4z" fill="#b8bec7"/><path d="M4 12l5-5 6 5v3H4z" fill="#2d8cf0"/><path d="M0 3h7M3.500 0v7" stroke="#ff7a1a" stroke-width="2"/></svg>定位</button>
                    <button class="flex items-center gap-1"><svg class="size-[15px]" viewBox="0 0 16 16"><path d="M10 1H1v11M13 4H4v11h4" fill="none" stroke="#999fa7" stroke-width="1.300"/><path d="M8 8h7v8H8z" fill="#e64545"/><path d="M9 9l5 5M14 9l-5 5" stroke="#fff"/></svg>删除</button>
                </div>
                <div class="relative flex-1 overflow-hidden">
                    <div class="h-[346px] w-[264px] overflow-hidden">
                        <table class="w-full table-fixed border-collapse text-[#e6e6e6]">
                            <colgroup><col class="w-[210px]"><col class="w-9"><col class="w-[18px]"></colgroup>
                            <thead><tr class="h-[25px]"><th class="bg-[#4a4a4a] font-bold text-white">名称</th><th class="border-x border-[#505050] bg-[#646464] font-normal">锁定</th><th class="overflow-hidden bg-[#646464] pl-1 text-left font-normal whitespace-nowrap">对</th></tr></thead>
                            <tbody id="drawings"></tbody>
                        </table>
                    </div>
                    <div class="absolute top-[78px] right-[3px] h-[158px] w-2 rounded-full bg-[#444]"></div>
                    <div class="absolute bottom-[2px] left-[14px] h-2 w-[157px] rounded-full bg-[#444]"></div>
                </div>
            </section>
            <section class="mt-[5px] flex min-h-0 flex-1 flex-col border border-b-0 border-[#333]">
                <div class="flex h-3 shrink-0 items-center justify-end bg-[#383838] pr-[5px]"><button aria-label="关闭" class="text-[#ccc]"><svg class="size-[7px]"><use href="#close"/></svg></button></div>
                <div class="flex h-[22px] shrink-0 items-stretch border-b border-[#333] bg-[#4a4a4a]">
                    <button class="w-[65px] border-r border-[#333] font-bold">属性列表</button>
                    <button class="-mb-px w-[65px] border-r border-[#333] bg-[#636363] pt-px">图层管理</button>
                </div>
                <div class="flex h-7 shrink-0 items-center gap-2 border-b border-[#333] bg-[#4a4a4a] pl-[5px]"><button>显示指定图层</button><button>隐藏指定图层</button></div>
                <div class="bg-[linear-gradient(#636363_21px,transparent_21px)]">
                    <table class="w-[238px] table-fixed border-collapse text-[#e6e6e6]">
                        <colgroup><col class="w-[51px]"><col class="w-9"><col></colgroup>
                        <thead><tr class="h-[21px]"><th class="border-r border-b border-[#505050] p-0 font-normal">开 / 关</th><th class="border-r border-b border-[#505050] p-0 font-normal">颜色</th><th class="border-r border-b border-[#505050] p-0 font-normal">名称</th></tr></thead>
                        <tbody id="layers"></tbody>
                    </table>
                </div>
            </section>
        </div>

        <div class="flex w-1 shrink-0 flex-col"><div class="mt-[234px] flex h-[100px] items-center bg-[#383838] text-[#999]"><svg class="h-2 w-1" viewBox="0 0 4 8"><path d="M4 0v8L0 4z" fill="currentColor"/></svg></div></div>

        <div class="flex min-w-0 flex-1 flex-col">
            <!-- Model canvas -->
            <section class="relative h-[567px] shrink-0 overflow-hidden bg-black">
                <svg class="block h-full w-full" viewBox="498 147 1422 567" preserveAspectRatio="xMinYMin slice">
                    <g stroke="#00c8c8" fill="none">
                        <path d="M498 281.500H822.500V147M1447.500 147V281.500H844.500V147M1469.500 147V281.500H1920"/>
                        <path d="M498 297.500H822.500V442.500M844.500 442.500V297.500H1447.500V442.500M1920 297.500H1469.500V442.500"/>
                        <path d="M498 461.500H822.500V606.500M844.500 606.500V461.500H1447.500V606.500M1916 461.500H1469.500V606.500"/>
                        <path d="M498 621.500H822.500V714M844.500 714V621.500H1447.500V714M1469.500 714V621.500H1920"/>
                        <path d="M498 442.500H822M845 442.500H1447M1470 442.500H1916M498 606.500H823M844 606.500H1448M1469 606.500H1920M844.500 147V281M844.500 298V442M844.500 462V606M844.500 622V714" stroke="#00f4f4"/>
                    </g>
                    <g fill="#5e5e5e" stroke="#d8d800"><path d="M811.500 430.500h44v43h-44zM1436.500 430.500h44v43h-44z"/></g>
                    <g stroke="#e00000" fill="none">
                        <path d="M833.500 147V714M498 289.500H1920M498 451.500H1916"/>
                        <path d="M1458 147V714M498 614.500H1920" stroke="#b00000" stroke-width="1.500"/>
                        <path d="M823 278.500h21M823 300.500h21M823 306.500h21M1448 278.500h21M1448 300.500h21M1448 306.500h21M823 590.500h21M823 603.500h21M823 625.500h21M823 631.500h21M1448 590.500h21M1448 603.500h21M1448 625.500h21M1448 631.500h21"/>
                        <path d="M823 266h21M823 272.500h21M823 313h21M1448 266h21M1448 272.500h21M1448 313h21M823 597h21M823 638h21M1448 597h21M1448 638h21" stroke="#a00000" stroke-width="1.500"/>
                        <path d="M825.500 592v6l16 7v19l-16 6v6"/>
                    </g>
                    <g fill="none" stroke="#008a00"><circle cx="833" cy="159" r="11.500"/><circle cx="1458" cy="159" r="11.500"/><circle cx="833" cy="702" r="11.500"/><circle cx="1458" cy="702" r="11.500"/><circle cx="510" cy="452" r="11.500"/><circle cx="1907" cy="452" r="11.500"/></g>
                    <g fill="#fff" text-anchor="middle" class="text-[18px]"><text x="833" y="166">2</text><text x="1458" y="166">3</text><text x="833" y="709">2</text><text x="1458" y="709">3</text><text x="510" y="459">B</text><text x="1908" y="459">B</text></g>
                    <g fill="#e6e6e6" class="font-['Roboto_Condensed','Liberation_Sans_Narrow','Liberation_Sans',sans-serif] text-[18px] font-light">
                        <text x="850" y="278">9L20 4/3/2</text>
                        <text x="1474" y="278">8L20 4/4</text>
                        <text x="1109" y="315">2L18/3L20</text>
                        <text x="1734" y="315">2L18/3L20</text>
                        <text x="860" y="439">3L25/2L22</text>
                        <text x="1484" y="439">3L25/2L20</text>
                        <text x="735" y="719">5L25 3/2</text>
                        <text transform="translate(863 240) rotate(-90)">3L22/6L25</text>
                        <text transform="translate(1487 234) rotate(-90)">8L25 2/6</text>
                        <text transform="translate(820 425) rotate(-90)">9L25 5/4</text>
                        <text transform="translate(1444 425) rotate(-90)">10L25 5/5</text>
                        <text transform="translate(820 627) rotate(-90)">6L25 4/2(-2)</text>
                        <text transform="translate(863 595) rotate(-90)">2L25+2L22</text>
                        <text transform="translate(886 606) rotate(-90)">C8@100/150(4)</text>
                        <text transform="translate(910 580) rotate(-90)">N6L12</text>
                        <text transform="translate(1487 735) rotate(-90)">3L22/6L25</text>
                    </g>
                    <rect x="836.500" y="395.500" width="131" height="69" rx="2" fill="none" stroke="#ff2312" stroke-width="3"/>
                    <path d="M548 664V640" stroke="#0f0" stroke-width="4"/><path d="M548 635l5 11h-10z" fill="#0f0"/><path d="M544 622l4 6 4-6M548 628v6" stroke="#0f0" fill="none"/>
                    <path d="M548 664h20" stroke="red" stroke-width="4"/><path d="M578 664l-11-5v10z" fill="red"/><path d="M580 658l8 12M588 658l-8 12" stroke="red"/>
                    <circle cx="548" cy="664" r="5.500" fill="#0000c0"/>
                </svg>

                <!-- Recognition panel -->
                <div class="absolute top-0 left-0 w-[149px] border border-[#1d63ac] bg-[#1e4670] pb-[6px]">
                    <div class="flex h-3 items-center justify-end border-b border-[#14304f] bg-[#183858] pr-[5px]"><button aria-label="关闭" class="text-[#a8d0f5]"><svg class="size-[7px]"><use href="#close"/></svg></button></div>
                    <div class="flex flex-col gap-[6px] px-[6px] pt-[6px]">
                        <button class="h-[26px] rounded-xs border border-[#173d63] bg-[#205080] pt-px pr-0.5">提取边线</button>
                        <button class="relative h-[26px] rounded-xs border border-[#173d63] bg-[#205080] pt-px pr-[10px]">自动提取标注<svg class="absolute top-[10px] right-[5px] h-1 w-[7px]"><use href="#arrow"/></svg></button>
                        <button class="relative h-[26px] rounded-xs border border-[#173d63] bg-[#205080] pt-px pr-[10px]">点选识别梁<svg class="absolute top-[10px] right-[5px] h-1 w-[7px]"><use href="#arrow"/></svg></button>
                        <button class="h-[26px] rounded-xs border border-[#173d63] bg-[#205080] pt-px pr-0.5">编辑支座</button>
                        <button class="relative h-[26px] rounded-xs border border-[#173d63] bg-[#205080] pt-px pr-[10px]">点选识别原位标注<svg class="absolute top-[10px] right-[5px] h-1 w-[7px]"><use href="#arrow"/></svg></button>
                    </div>
                </div>

                <!-- View toolbar -->
                <div class="absolute top-0 right-0 flex h-[227px] w-[33px] flex-col items-center rounded-xs border border-[#bfbfc1] bg-[#97989c] pt-2 pr-0.5 text-[#2e3c50]">
                    <button aria-label="动态观察"><svg class="block size-[26px]" viewBox="0 0 26 26"><circle cx="13" cy="14" r="9" fill="#b4c6da" stroke="#465a72"/><circle cx="11" cy="11" r="4" fill="#e3ecf5"/><path d="M2 19c3 2 17-6 21-13" fill="none" stroke="#33435a" stroke-width="2"/><circle cx="21" cy="9" r="4" fill="#c7d6e6" stroke="#465a72"/></svg></button>
                    <button aria-label="三维" class="relative mt-[5px]"><svg class="size-6"><use href="#cube"/></svg><span class="absolute right-[6px] bottom-[2px] text-[9px] leading-none">3D</span></button>
                    <button aria-label="线框" class="mt-[5px]"><svg class="size-6" viewBox="0 0 24 24"><path d="M1 6l4-5h18v16l-5 6H1z" fill="#d3e8ff" stroke="#2e3c50"/><path d="M1 6l4-5h18l-5 5z" fill="#8094a6" stroke="#2e3c50"/><path d="M18 6v17M6 6v12h12M6 18l-5 5M18 18l5-1" fill="none" stroke="#2e3c50"/></svg></button>
                    <svg class="mt-[6px] h-[3px] w-[6px]"><use href="#arrow"/></svg>
                    <button aria-label="实体" class="mt-[6px]"><svg class="size-6"><use href="#cube"/></svg></button>
                    <svg class="mt-[6px] h-[3px] w-[6px]"><use href="#arrow"/></svg>
                    <button aria-label="旋转" class="mt-[6px]"><svg class="size-6" viewBox="0 0 24 24"><path d="M19 6a10 10 0 1 0 1 12" fill="none" stroke="#344358" stroke-width="2"/><path d="M22 1v8h-8z" fill="#344358"/></svg></button>
                    <svg class="mt-[6px] h-[3px] w-[6px]"><use href="#arrow"/></svg>
                    <div class="mt-[5px] w-[23px] border-t border-[#6a6a6d]"></div>
                    <button aria-label="显示设置" class="mt-1"><svg class="size-6" viewBox="0 0 24 24"><path d="M1 1h22v22H1z" fill="#8497ad" stroke="#2e3c50"/><path d="M1 4h22M12 9v12M4 6l1 2 2-3M15 6l1 2 2-3M4 10h2v2H4zM4 14h2v2H4zM4 18h2v2H4zM8 11h2M8 15h2M8 19h2M14 10h2v2h-2zM14 14h2v2h-2zM14 18h2v2h-2zM18 11h3M18 15h3M18 19h3" fill="none" stroke="#2e3c50"/></svg></button>
                </div>
                <div class="absolute top-[234px] right-0 flex h-[100px] w-1 items-center bg-[#383838] text-[#999]"><svg class="h-2 w-1" viewBox="0 0 4 8"><path d="M4 0v8L0 4z" fill="currentColor"/></svg></div>
            </section>

            <div class="flex h-1 shrink-0 justify-center"><div class="flex w-[100px] justify-center bg-[#383838] text-[#999]"><svg class="h-1 w-[7px]"><use href="#arrow"/></svg></div></div>

            <!-- Beam table -->
            <section class="relative flex min-h-0 flex-1 flex-col overflow-hidden border-l border-[#333]">
                <div class="flex h-3 shrink-0 items-center justify-end bg-[#383838] pr-[6px]"><button aria-label="关闭" class="text-[#ccc]"><svg class="size-[7px]"><use href="#close"/></svg></button></div>
                <h2 class="flex h-[22px] shrink-0 items-center border-b border-[#333] bg-[#4a4a4a] pl-2 font-bold">梁平法表格</h2>
                <div class="flex h-[29px] shrink-0 items-center gap-2 border-b border-[#333] bg-[#4a4a4a] pt-0.5 pl-[5px] text-[#909090]">
                    <button>复制跨数据</button><button>粘贴跨数据</button><button>输入当前列数据</button><button>删除当前列数据</button><button class="text-white">页面设置</button><button>调换起始跨</button><button class="text-white">悬臂钢筋代号</button>
                </div>
                <table class="w-[1442px] table-fixed border-collapse bg-[#646464] leading-4 text-[#e6e6e6] [&_th]:border-r [&_th]:border-b [&_th]:border-[#505050] [&_th]:p-0 [&_th]:font-normal">
                    <colgroup><col class="w-[60px]"><col class="w-[61px]"><col class="w-[61px]"><col class="w-[45px]"><col class="w-[101px]"><col class="w-[81px]"><col class="w-[81px]"><col class="w-[81px]"><col class="w-[101px]"><col class="w-[81px]"><col class="w-[101px]"><col class="w-[41px]"><col class="w-[61px]"><col class="w-[81px]"><col class="w-[81px]"><col class="w-[81px]"><col class="w-[81px]"><col class="w-[81px]"><col class="w-[81px]"></colgroup>
                    <thead>
                        <tr class="h-[17px]"><th rowspan="2">位置</th><th rowspan="2">名称</th><th rowspan="2">跨号</th><th rowspan="2">上通长<br>筋</th><th colspan="3">上部钢筋</th><th colspan="2">下部钢筋</th><th colspan="3">侧面钢筋</th><th rowspan="2">箍筋</th><th rowspan="2">肢数</th><th rowspan="2">次梁宽度</th><th rowspan="2">次梁加筋</th><th rowspan="2">吊筋</th><th rowspan="2">吊筋锚固</th><th rowspan="2">箍筋加密长度</th></tr>
                        <tr class="h-[17px]"><th>左支座钢筋</th><th>跨中钢筋</th><th>右支座钢筋</th><th>下通长筋</th><th>下部钢筋</th><th>侧面通长筋</th><th>侧面原位标注筋</th><th>拉筋</th></tr>
                    </thead>
                </table>
                <div class="absolute top-5 right-0 h-[64px] w-2 rounded-full border border-[#ccc] bg-[linear-gradient(#333_14px,#15b85c_14px,#5fe07f)]"></div>
                <div class="absolute right-[90px] bottom-[17px] w-[200px] whitespace-nowrap text-[#959595]">
                    <p class="text-[21px] leading-[26px]">激活 Windows</p>
                    <p class="text-[15px] leading-[22px]">转到“设置”以激活 Windows。</p>
                </div>
                <div class="absolute bottom-[3px] left-[446px] h-2 w-[720px] rounded-full bg-[#444]"></div>
            </section>
        </div>
    </main>

    <!-- Status bar -->
    <footer class="flex h-[30px] shrink-0 items-center border-t border-[#2f2f2f] bg-[#383838] pt-px whitespace-nowrap">
        <span class="w-[265px] pl-[2px]">X = 10022 Y = 4651</span>
        <span class="w-10">层高:</span><span class="w-[43px]">6</span>
        <span class="w-10">标高:</span><span class="w-[93px]">8.5~14.5</span><span class="w-[103px]">0</span>
        <span class="w-[103px]">隐藏: 0</span>
        <div class="flex items-center gap-1">
            <button aria-label="正交" class="flex h-[25px] w-6 items-center justify-center border border-[#2d2d2d]"><svg class="size-[14px]" viewBox="0 0 14 14"><path d="M1 1v12h12M1 9h4v4" fill="none" stroke="#bbb"/></svg></button>
            <button aria-label="捕捉" class="flex h-[25px] w-[35px] items-center justify-center gap-1 border border-[#1d63ac] bg-[#17375a]"><svg class="size-4" viewBox="0 0 16 16"><path d="M2 2h13v13H2z" fill="none" stroke="#4f9ff0"/><path d="M0 0h5v5H0z" fill="#ff8a3c"/></svg><svg class="h-[3px] w-[5px]"><use href="#arrow"/></svg></button>
            <button aria-label="交点" class="mx-0.5 flex h-[25px] w-[25px] items-center justify-center border border-[#2d2d2d]"><svg class="size-[15px]" viewBox="0 0 15 15"><path d="M0 0l15 15M15 0L0 15" stroke="#6a6a6a"/></svg></button>
            <button aria-label="角度" class="flex h-[25px] w-[35px] items-center justify-center gap-1 border border-[#2d2d2d]"><svg class="size-4" viewBox="0 0 16 16"><path d="M12 1L1 14h14" fill="none" stroke="#ccc"/><path d="M5 6h3v3H5z" fill="#ddd"/></svg><svg class="h-[3px] w-[5px] text-[#ccc]"><use href="#arrow"/></svg></button>
            <button aria-label="偏移" class="flex h-[25px] w-[35px] items-center justify-center gap-1 border border-[#2d2d2d]"><svg class="size-4" viewBox="0 0 16 16"><path d="M0 4h7M3.500 0v8" stroke="#ddd"/><path d="M6 10h9v4H6z" fill="#ddd"/></svg><svg class="h-[3px] w-[5px] text-[#ccc]"><use href="#arrow"/></svg></button>
            <button class="h-[25px] w-[72px] border border-[#2d2d2d]">跨图层选择</button>
            <button class="h-[25px] w-[61px] border border-[#2d2d2d]">折线选择</button>
            <span class="pl-[3px]">按鼠标左键指定第一个角点，或拾取构件图元</span>
        </div>
        <span class="mr-9 ml-auto">500 FPS</span>
    </footer>

    <!-- Taskbar -->
    <div class="flex h-[41px] shrink-0 items-stretch border-t border-white bg-[#202124]">
        <button aria-label="开始" class="flex w-12 items-center justify-center"><svg class="size-4" viewBox="0 0 16 16"><path d="M0 2l7-1v7H0zM8 1l8-1v8H8zM0 9h7v6l-7-1zM8 9h8v7l-8-1z" fill="#fff"/></svg></button>
        <button aria-label="搜索" class="flex w-12 items-center justify-center"><svg class="size-[18px]" viewBox="0 0 18 18"><circle cx="11" cy="7" r="5" fill="none" stroke="#fff" stroke-width="1.500"/><path d="M7 11l-6 6" stroke="#fff" stroke-width="1.500"/></svg></button>
        <button aria-label="浏览器" class="flex w-[57px] items-center gap-1 pl-[14px]"><svg class="size-6" viewBox="0 0 24 24"><path d="M20 16q-2 5-8 5a8 8 0 1 1 9-8H5" fill="none" stroke="#1f96f5" stroke-width="4"/><path d="M2 22C-1 16 12 1 22 2M2 22q4 2 8-2" fill="none" stroke="#61c0ff" stroke-width="1.500"/></svg><svg class="h-2.5 w-[5px]" viewBox="0 0 5 10"><path d="M0 0v10l5-5z" fill="#0a7bf5"/></svg></button>
        <div class="flex gap-[9px] pl-1">
            <button aria-label="色轮" class="flex w-10 items-center justify-center border-b-2 border-[#76b9ed]"><svg class="size-6" viewBox="0 0 24 24"><path d="M12 12Q4 10 5 3q7-5 13-1-6 2-6 10z" fill="#c84be0"/><path d="M12 12q-1-8 6-10 6 3 6 10-4-4-12 0z" fill="#ff5a4d"/><path d="M12 12q8-4 12 0 0 7-6 10 1-6-6-10z" fill="#ff8b2a"/><path d="M12 12q8 4 6 10-6 3-12 0 6-2 6-10z" fill="#ffe000"/><path d="M12 12q0 9-6 10-6-3-6-9 5 3 12-1z" fill="#30d050"/><path d="M12 12q-8 5-12 1Q0 6 5 3q0 7 7 9z" fill="#32a8f8"/><circle cx="12" cy="12" r="2.500" fill="#fff"/></svg></button>
            <button aria-label="L" class="flex w-10 items-center justify-center"><svg class="size-6" viewBox="0 0 24 24"><path d="M0 0h24v24H0z" fill="#2eb24c"/><path d="M0 0h5v13h11v11H0z" fill="#00007a"/><path d="M5 0v14h12v10" fill="none" stroke="#fff" stroke-width="3"/></svg></button>
            <button aria-label="安全浏览器" class="flex w-10 items-center justify-center border-b-2 border-[#76b9ed]"><svg class="size-6" viewBox="0 0 24 24"><circle cx="12" cy="12" r="10" fill="#55b82e" stroke="#fff" stroke-width="1.500"/><path d="M18 15q-2 3-6 3a6 6 0 1 1 6-6H6" fill="none" stroke="#fff" stroke-width="3"/><path d="M2 20C5 8 14 1 22 2" fill="none" stroke="#3a9a18" stroke-width="1.500"/></svg></button>
            <button aria-label="土建计量" class="flex w-10 items-center justify-center border-b-2 border-[#76b9ed]"><svg class="size-6" viewBox="0 0 24 24"><rect width="24" height="24" rx="4" fill="#3e92ee"/><path d="M4 5h16v4h-5l-1 11h-4L9 9H4z" fill="#fff"/></svg></button>
            <button aria-label="计算器" class="flex w-10 items-center justify-center border-b-2 border-[#76b9ed]"><svg class="size-6" viewBox="0 0 24 24"><path d="M3 0h18v24H3z" fill="#6d7780"/><path d="M5 2h14v4H5z" fill="#54d5ff"/><path d="M5 8h4v4H5zM10 8h4v4h-4zM15 8h4v4h-4zM5 13h4v4H5zM10 13h4v4h-4zM5 18h4v4H5zM10 18h4v4h-4z" fill="#e4e7ea"/><path d="M15 13h4v9h-4z" fill="#17477f"/></svg></button>
            <button aria-label="WPS" class="flex w-10 items-center justify-center border-b-2 border-[#76b9ed]"><svg class="size-6" viewBox="0 0 24 24"><path d="M0 3h16l-2 4H6l3 8 5-8h3v7l4-8h-4V3h7l-7 18h-4l-1-7-4 7H7z" fill="#ff3b24"/></svg></button>
            <button aria-label="CAD" class="flex w-10 items-center justify-center border-b-2 border-[#76b9ed]"><svg class="size-6" viewBox="0 0 24 24"><rect x="1" y="1" width="22" height="22" rx="2" fill="#1462b8" stroke="#bbb" stroke-width="2"/><path d="M9 9H5v7h4M10 16l2-8 2 8M16 9v7h4V9z" fill="none" stroke="#dcecff" stroke-width="1.500"/><circle cx="12" cy="7" r="2" fill="none" stroke="#cde"/></svg></button>
            <button aria-label="文件夹" class="flex w-10 items-center justify-center border-b-2 border-[#76b9ed]"><svg class="size-6" viewBox="0 0 24 24"><path d="M1 3h8l2 3h12v15H1z" fill="#ffd562"/><path d="M1 3h8v3H1z" fill="#e39a1e"/><path d="M5 21v-8h14v8h-4v-4H9v4z" fill="#2f8be0"/></svg></button>
            <button aria-label="CAD看图" class="flex w-10 items-center justify-center border-b-2 border-[#76b9ed]"><svg class="size-6" viewBox="0 0 24 24"><rect width="24" height="24" rx="4" fill="#0b93e0"/><path d="M5 4h10l3 3v13H5z" fill="#fff"/><path d="M9 10H7v4h2M10 14v-4h2v4M14 10v4h2v-4z" fill="none" stroke="#0b93e0"/><path d="M13 19l8-8" stroke="#fff" stroke-width="3"/><path d="M14 18l7-7" stroke="#0b93e0"/></svg></button>
        </div>
        <div class="ml-auto flex items-center">
            <span>桌面</span>
            <span class="mb-5 ml-2 w-5 text-base leading-none">»</span>
            <svg class="h-6 w-[134px]" viewBox="0 0 134 24">
                <circle cx="13" cy="13" r="10" fill="#0c91dc" stroke="#fff" stroke-width="2"/><path d="M10 10q0-3 3-3t3 3-3 4M13 16v2" fill="none" stroke="#fff" stroke-width="2"/>
                <path d="M34 15l5-5 5 5" fill="none" stroke="#fff" stroke-width="1.300"/>
                <path d="M56 10h3l4-4v13l-4-4h-3z" fill="none" stroke="#fff"/><circle cx="68" cy="16" r="4.500" fill="#d8202c"/><path d="M66 14l4 4M70 14l-4 4" stroke="#fff"/>
                <rect x="108" y="5" width="15" height="15" rx="3" fill="#f4511e" transform="rotate(-8 115 12)"/><path d="M120 9q-8-2-8 1 0 2 4 2t4 3-9 1" fill="none" stroke="#fff" stroke-width="2"/>
                <text x="80" y="17" fill="#fff" class="text-sm">中</text>
            </svg>
            <div class="w-[72px] text-center leading-[17px]">17:48 周三<br>2023/3/22</div>
            <svg class="ml-3 h-7 w-7" viewBox="0 0 28 28"><path d="M2 4h16v12h-9l-3 4v-4H2z" fill="#fff"/><path d="M5 7h10M5 10h10M5 13h8" stroke="#222"/><circle cx="18" cy="19" r="8" fill="#2b2b2b" stroke="#aaa"/><text x="18" y="23" text-anchor="middle" fill="#fff" class="text-xs font-bold">3</text></svg>
            <div class="mr-1 ml-2 h-10 border-r border-[#777]"></div>
        </div>
    </div>

    <script>
        // Selector strip above the panels
        const selectors = [['楼层', '第3层'], ['构件大类', '梁'], ['构件类型', '梁'], ['构件', ''], ['分层', '分层1']];
        document.getElementById('selectors').innerHTML = selectors.map(([label, value]) => `
            <div class="relative w-[99px]">
                <select aria-label="${label}" class="h-[21px] w-full appearance-none border border-[#2c2c2c] bg-[#4a4a4a] pl-[2px] outline-none"><option>${value}</option></select>
                <svg class="pointer-events-none absolute top-[9px] right-[5px] h-[3px] w-1.5 text-[#bbb]"><use href="#arrow"/></svg>
            </div>`).join('');

        // Entries without an icon are folders
        const tree = [
            ['砌体柱(Z)', 't-col'], ['墙'], ['剪力墙(Q)', 't-wall'], ['人防门框墙(RF)', 't-rf'], ['砌体墙(Q)', 't-brick'],
            ['砌体加筋(Y)', 't-rebar'], ['保温墙(Q)', 't-ins'], ['暗梁(A)', 't-dark'], ['墙垛(E)', 't-stack'], ['幕墙(Q)', 't-bricks'],
            ['门窗洞'], ['门(M)', 't-door'], ['窗(C)', 't-win'], ['门联窗(A)', 't-dw'], ['墙洞(D)', 't-hole'], ['带形窗(C)', 't-strip'],
            ['带形洞(D)', 't-strip2'], ['飘窗(X)', 't-bay'], ['老虎窗', 't-house'], ['过梁(G)', 't-lint'], ['壁龛(I)', 't-niche'],
            ['梁'], ['梁(L)', 't-beam', true], ['连梁(G)', 't-link'], ['圈梁(E)', 't-ring'],
            ['板'], ['现浇板(B)', 't-slab'], ['螺旋板(B)', 't-spiral'], ['柱帽(V)', 't-cap'], ['板洞(N)', 't-sh'],
            ['板受力筋(S)', 't-sr'], ['板负筋(F)', 't-sf'], ['楼层板带(H)', 't-win'],
        ];
        document.getElementById('tree').innerHTML = tree.map(([name, icon, active]) => {
            if (!icon) return `<li class="flex h-6 items-center gap-[5px] pl-[2px]"><svg class="h-3 w-4"><use href="#folder"/></svg>${name}</li>`;
            const box = active ? 'border-[#46597a] bg-[#5f7ba8]' : 'border-transparent';
            return `<li class="flex h-6 items-center pl-10"><a href="#" class="flex h-[21px] w-[110px] items-center gap-[6px] border pl-[2px] ${box}"><svg class="size-4"><use href="#${icon}"/></svg>${name}</a></li>`;
        }).join('');

        const drawings = [
            ['4.500m标高楼面梁配筋图', '(首'], ['4.500m标高楼面板配筋平面图', '(首'], ['4.500m标高楼面梁配筋图H-R', '(首'],
            ['A-G梁', '(首'], ['R-Y梁', '(首'], ['一层平面图', '(首', 'last'], ['第2层 (4.5~8.5)'],
            ['8.500m柱配筋平面图', '(第'], ['8.500m标高楼面梁配筋图', '(第'], ['A-G二层梁', '(第'], ['H-R二层梁', '(第'], ['Q-Y二层梁', '(第', 'last'],
            ['第3层 (8.5~14.5)'], ['14.500m柱配筋平面图', '(第'], ['14.500m标高楼面梁配筋图', '(第', 'last', true],
        ];
        document.getElementById('drawings').innerHTML = drawings.map(([name, floor, last, active]) => {
            if (!floor) return `<tr class="h-[21px] border-b border-[#505050]"><td colspan="3" class="p-0"><div class="flex h-5 items-center gap-[7px] pl-[2px]"><button aria-label="折叠" class="flex size-[13px] items-center justify-center rounded-xs border border-[#383838] bg-[#666]"><span class="h-px w-[5px] bg-white"></span></button>${name}</div></td></tr>`;
            const line = last ? 'M8.500 0v10.500H25' : 'M8.500 0v21M8.500 10.500H25';
            return `<tr class="h-[21px] border-b border-[#505050] ${active ? 'bg-[#6a7d98]' : ''}">
                <td class="p-0"><div class="flex h-5 items-center gap-[6px] whitespace-nowrap ${active ? 'outline -outline-offset-1 outline-[#8a8a8a]' : ''}"><svg class="h-5 w-[25px] shrink-0 text-[#484848]"><path d="${line}" fill="none" stroke="currentColor"/></svg>${name}</div></td>
                <td class="border-x border-[#505050] p-0"><svg class="mx-auto h-[14px] w-3"><use href="#padlock"/></svg></td>
                <td class="overflow-hidden p-0 pl-[3px] whitespace-nowrap">${floor}</td></tr>`;
        }).join('');

        document.getElementById('layers').innerHTML = ['已提取的 CAD 图层', 'CAD 原始图层'].map(name => `
            <tr class="h-[21px]">
                <td class="border border-l-0 border-[#505050] p-0"><div class="relative mx-auto size-[14px]"><input type="checkbox" checked aria-label="${name}" class="block size-[14px] appearance-none rounded-xs border border-[#2e2e2e] bg-[#555]"><svg class="pointer-events-none absolute top-[3px] left-[3px] size-2" viewBox="0 0 8 8"><path d="M0 4l3 3 5-6" fill="none" stroke="#fff" stroke-width="1.500"/></svg></div></td>
                <td class="border border-[#505050] p-0"><svg class="mx-auto h-2 w-[5px]" viewBox="0 0 5 8"><path d="M.500 .500v7l4-3.500z" fill="none" stroke="#333"/></svg></td>
                <td class="border border-[#505050] p-0 pl-1">${name}</td>
            </tr>`).join('');
    </script>
</body>
</html>
